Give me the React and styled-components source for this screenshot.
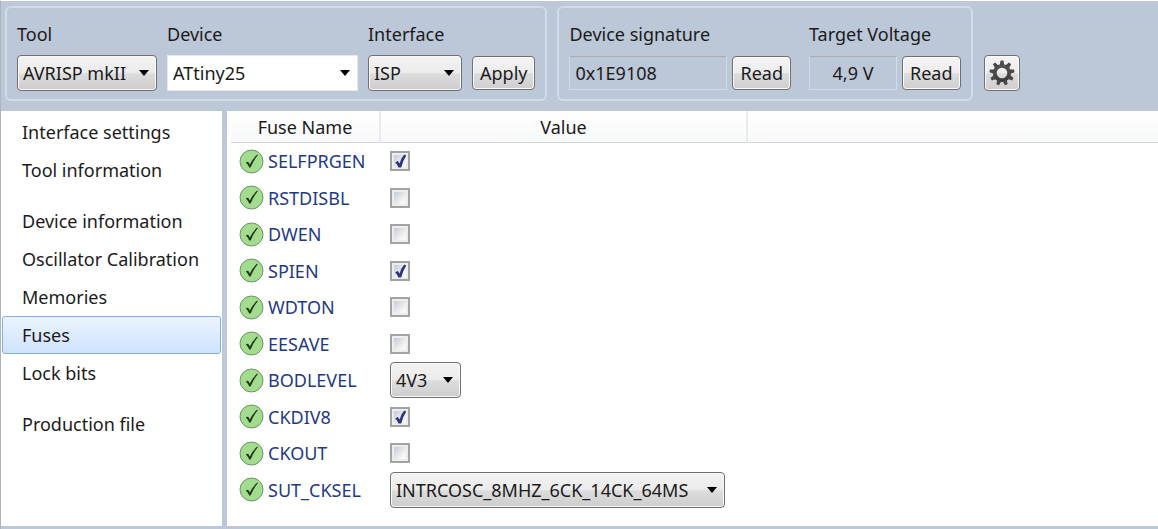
import React, { useState } from 'react'
import styled, { createGlobalStyle } from 'styled-components'

const GlobalStyle = createGlobalStyle`
  * {
    box-sizing: border-box;
  }

  body {
    margin: 0;
    background: #bcc7d8;
    color: #1b1b1b;
    font-family: 'Noto Sans', sans-serif;
    font-size: 18px;
    line-height: 24px;
  }

  button,
  input,
  select {
    margin: 0;
    color: inherit;
    font: inherit;
  }
`

const StyledWindow = styled.div`
  display: flex;
  flex-direction: column;
  min-height: 100vh;
  padding-bottom: 3px;
  border-top: 1px solid #fff;
  border-left: 1px solid #b0b4ba;
`

const Toolbar = styled.header`
  display: flex;
  align-items: flex-end;
  gap: 10px;
  padding: 5px 4px 10px;
`

const Group = styled.div`
  display: flex;
  gap: ${({ $gap }) => $gap}px;
  padding: 14px 10px 8px;
  border: 2px solid #d3dbe7;
  border-radius: 6px;
`

const Field = styled.div`
  display: flex;
  flex-direction: column;
  gap: 9px;
`

const FieldLabel = styled.label`
  min-height: 24px;
  white-space: nowrap;
`

const ControlRow = styled.div`
  display: flex;
  align-items: center;
  gap: ${({ $gap }) => $gap}px;
  height: 36px;
`

const Button = styled.button`
  height: 34px;
  padding: 0 7px;
  background: linear-gradient(#f4f4f4, #ececec 50%, #dcdcdc 52%, #cfcfcf);
  border: 1px solid #707070;
  border-radius: 4px;
  box-shadow: inset 0 0 0 1px #fafafa;
`

const SettingsButton = styled(Button)`
  display: flex;
  align-items: center;
  justify-content: center;
  width: 36px;
  height: 36px;
  margin: 0 0 10px 1px;
  padding: 0;
`

const ReadOnlyBox = styled.input`
  width: ${({ $width }) => $width}px;
  height: 34px;
  padding: 0 5px;
  background: transparent;
  border: 1px solid #d3dbe7;
  border-top-color: #abadb3;
  border-radius: 0;
  text-align: ${({ $align }) => $align || 'left'};
  outline: none;
`

const SelectWrap = styled.span`
  position: relative;
  display: inline-flex;
  width: ${({ $width }) => $width}px;
  height: 36px;

  &::after {
    content: '';
    position: absolute;
    top: 15px;
    right: 8px;
    border: 5px solid transparent;
    border-top: 6px solid #000;
    border-bottom: 0;
    pointer-events: none;
  }
`

const StyledSelect = styled.select`
  width: 100%;
  padding: 0 20px 0 5px;
  appearance: none;
  background: ${({ $plain }) =>
    $plain ? '#fff' : 'linear-gradient(#f3f3f3, #ebebeb 50%, #dddddd 52%, #cdcdcd)'};
  border: 1px solid ${({ $plain }) => ($plain ? '#e3e9ef' : '#707070')};
  border-radius: ${({ $plain }) => ($plain ? 0 : 4)}px;
  box-shadow: inset 0 0 0 1px ${({ $plain }) => ($plain ? '#fff' : '#f8f8f8')};
  white-space: nowrap;
`

const Body = styled.div`
  display: flex;
  flex: 1;
`

const Sidebar = styled.nav`
  flex: none;
  display: flex;
  flex-direction: column;
  gap: 13px;
  width: 221px;
  padding: 2px 1px;
  background: #fff;
`

const NavList = styled.ul`
  margin: 0;
  padding: 0;
  list-style: none;
`

const NavLink = styled.a`
  display: block;
  height: 38px;
  padding: 6px 19px;
  border: 1px solid ${({ $active }) => ($active ? '#84acdd' : 'transparent')};
  border-radius: 3px;
  background: ${({ $active }) => ($active ? 'linear-gradient(#ebf4fe, #cfe3ff)' : 'none')};
  color: inherit;
  text-decoration: none;
  white-space: nowrap;
`

const Content = styled.main`
  flex: 1;
  margin-left: 5px;
  padding-left: 4px;
  background: #fff;
`

const FuseTable = styled.table`
  width: 100%;
  table-layout: fixed;
  border-collapse: separate;
  border-spacing: 0;

  th {
    height: 32px;
    padding: 0;
    background: linear-gradient(#fff, #f7f8f9);
    border-right: 2px solid #e8eaec;
    border-bottom: 1px solid #d5d5d5;
    font-weight: 400;
  }

  th:last-child {
    border-right: 0;
  }

  td {
    height: 36px;
    padding: 0 0 0 8px;
  }

  td + td {
    padding-left: 9px;
  }

  tr:nth-child(even) td {
    height: 37px;
  }
`

const FuseLabel = styled.label`
  display: flex;
  align-items: center;
  gap: 4px;
  color: #1f3a85;
`

const ValueCell = styled.div`
  display: flex;
  align-items: center;
`

const CheckWrap = styled.span`
  position: relative;
  display: flex;

  svg {
    position: absolute;
    inset: 0;
    pointer-events: none;
  }
`

const Checkbox = styled.input`
  width: 20px;
  height: 20px;
  padding: 2px;
  appearance: none;
  background: linear-gradient(135deg, #c6cbd3, #f8f8f8 80%) content-box, #ededee;
  border: 2px solid #a2a3a3;
  outline: none;
`

const GearIcon = () => (
  <svg width="26" height="26" viewBox="-13 -13 26 26" aria-hidden="true">
    <defs>
      <linearGradient id="gear" gradientUnits="userSpaceOnUse" x1="0" y1="-12" x2="0" y2="12">
        <stop offset="0" stopColor="#5c5c5c" />
        <stop offset="1" stopColor="#353535" />
      </linearGradient>
    </defs>
    <circle r="7.2" fill="none" stroke="url(#gear)" strokeWidth="3.8" />
    {[0, 40, 80, 120, 160, 200, 240, 280, 320].map(angle => (
      <path key={angle} d="M-2.2 -8L-1.4 -12.5H1.4L2.2 -8Z" fill="#484848" transform={`rotate(${angle})`} />
    ))}
  </svg>
)

const StatusIcon = () => (
  <svg width="25" height="25" viewBox="0 0 25 25" aria-hidden="true">
    <circle cx="12.5" cy="12.5" r="11.5" fill="#a3dc8e" stroke="#6d9364" />
    <path
      d="M6.8 13.4Q8.6 12.2 9.4 13L10.8 15.6Q13.6 9.6 18.2 5.6L18.8 6.2Q14.4 11.6 11.6 18.6H10.2Q8.8 15 6.8 13.4Z"
      fill="#1d3a12"
    />
  </svg>
)

const CheckMark = () => (
  <svg width="20" height="20" viewBox="0 0 20 20" aria-hidden="true">
    <path d="M5.2 11.2L7.8 10L9.6 12.6Q11 7.4 14.2 3.6L16.2 4.6Q13 9.6 11.2 16.6H8.4Q7.4 13.6 5.2 11.2Z" fill="#31347c" />
  </svg>
)

const navGroups = [
  ['Interface settings', 'Tool information'],
  ['Device information', 'Oscillator Calibration', 'Memories', 'Fuses', 'Lock bits'],
  ['Production file'],
]

const initialFuses = [
  { name: 'SELFPRGEN', value: true },
  { name: 'RSTDISBL', value: false },
  { name: 'DWEN', value: false },
  { name: 'SPIEN', value: true },
  { name: 'WDTON', value: false },
  { name: 'EESAVE', value: false },
  { name: 'BODLEVEL', value: '4V3', width: 71 },
  { name: 'CKDIV8', value: true },
  { name: 'CKOUT', value: false },
  { name: 'SUT_CKSEL', value: 'INTRCOSC_8MHZ_6CK_14CK_64MS', width: 335 },
]

function Select({ id, width, value, plain }) {
  return (
    <SelectWrap $width={width}>
      <StyledSelect id={id} $plain={plain} defaultValue={value}>
        <option>{value}</option>
      </StyledSelect>
    </SelectWrap>
  )
}

function FuseRow({ name, value, width, onToggle }) {
  return (
    <tr>
      <td>
        <FuseLabel htmlFor={name}>
          <StatusIcon />
          {name}
        </FuseLabel>
      </td>
      <td>
        <ValueCell>
          {typeof value === 'string' ? (
            <Select id={name} width={width} value={value} />
          ) : (
            <CheckWrap>
              <Checkbox id={name} type="checkbox" checked={value} onChange={onToggle} />
              {value && <CheckMark />}
            </CheckWrap>
          )}
        </ValueCell>
      </td>
      <td />
    </tr>
  )
}

export default function App() {
  const [active, setActive] = useState('Fuses')
  const [fuses, setFuses] = useState(initialFuses)

  const toggleFuse = name =>
    setFuses(fuses.map(fuse => (fuse.name === name ? { ...fuse, value: !fuse.value } : fuse)))

  return (
    <StyledWindow>
      <GlobalStyle />
      <Toolbar>
        <Group $gap={10}>
          <Field>
            <FieldLabel htmlFor="tool">Tool</FieldLabel>
            <Select id="tool" width={140} value="AVRISP mkII" />
          </Field>
          <Field>
            <FieldLabel htmlFor="device">Device</FieldLabel>
            <Select id="device" width={191} value="ATtiny25" plain />
          </Field>
          <Field>
            <FieldLabel htmlFor="interface">Interface</FieldLabel>
            <ControlRow $gap={10}>
              <Select id="interface" width={94} value="ISP" />
              <Button>Apply</Button>
            </ControlRow>
          </Field>
        </Group>
        <Group $gap={18}>
          <Field>
            <FieldLabel htmlFor="signature">Device signature</FieldLabel>
            <ControlRow $gap={5}>
              <ReadOnlyBox id="signature" $width={158} value="0x1E9108" readOnly />
              <Button>Read</Button>
            </ControlRow>
          </Field>
          <Field>
            <FieldLabel htmlFor="voltage">Target Voltage</FieldLabel>
            <ControlRow $gap={5}>
              <ReadOnlyBox id="voltage" $width={88} $align="center" value="4,9 V" readOnly />
              <Button>Read</Button>
            </ControlRow>
          </Field>
        </Group>
        <SettingsButton aria-label="Settings">
          <GearIcon />
        </SettingsButton>
      </Toolbar>

      <Body>
        <Sidebar>
          {navGroups.map(items => (
            <NavList key={items[0]}>
              {items.map(item => (
                <li key={item}>
                  <NavLink href="#" $active={item === active} onClick={() => setActive(item)}>
                    {item}
                  </NavLink>
                </li>
              ))}
            </NavList>
          ))}
        </Sidebar>
        <Content>
          <FuseTable>
            <colgroup>
              <col width="150" />
              <col width="367" />
              <col />
            </colgroup>
            <thead>
              <tr>
                <th>Fuse Name</th>
                <th>Value</th>
                <th />
              </tr>
            </thead>
            <tbody>
              {fuses.map(fuse => (
                <FuseRow key={fuse.name} {...fuse} onToggle={() => toggleFuse(fuse.name)} />
              ))}
            </tbody>
          </FuseTable>
        </Content>
      </Body>
    </StyledWindow>
  )
}
